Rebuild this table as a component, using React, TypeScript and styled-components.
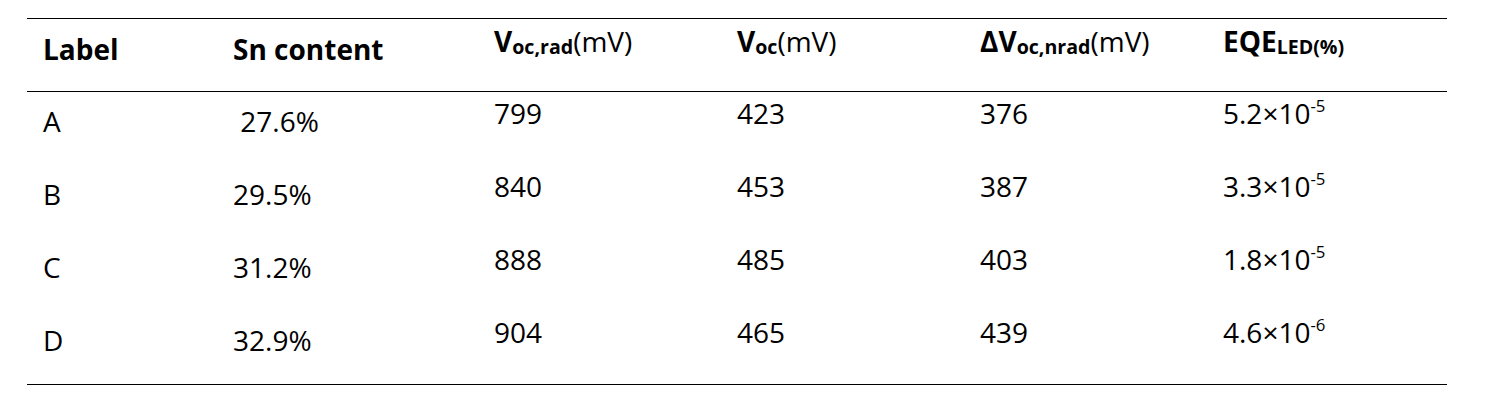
import React from 'react';
import styled, { createGlobalStyle } from 'styled-components';

const GlobalStyle = createGlobalStyle`
  html, body {
    margin: 0;
    padding: 0;
    background: #ffffff;
  }
  body {
    font-family: "Open Sans", "Noto Sans", sans-serif;
    color: #000;
  }
`;

const Page = styled.div`
  width: 1500px;
  height: 405px;
  padding: 18px 0 0 27px;
  box-sizing: border-box;
`;

const Table = styled.div`
  width: 1420px;
  border-top: 1px solid #000;
  border-bottom: 1px solid #000;
`;

const Row = styled.div<{ $header?: boolean }>`
  display: grid;
  grid-template-columns: 190px 261px 243px 243px 243px 1fr;
  align-items: start;
  padding-left: 16px;
  height: 73px;
  box-sizing: border-box;
  border-bottom: ${({ $header }) => ($header ? '1px solid #000' : 'none')};
`;

const HeadCell = styled.div<{ $lowered?: boolean }>`
  font-size: 28px;
  line-height: 28px;
  font-weight: 700;
  white-space: nowrap;
  padding-top: ${({ $lowered }) => ($lowered ? '16px' : '8px')};
`;

const Cell = styled.div<{ $lowered?: boolean }>`
  font-size: 28px;
  line-height: 28px;
  font-weight: 400;
  white-space: nowrap;
  padding-top: ${({ $lowered }) => ($lowered ? '15px' : '7px')};
`;

const Sub = styled.sub`
  font-size: 0.7em;
  line-height: 0;
  vertical-align: -0.08em;
  font-weight: 700;
`;

const Unit = styled.span`
  font-weight: 400;
`;

const Sup = styled.sup`
  font-size: 0.6em;
  line-height: 0;
  vertical-align: 0.72em;
`;

const rows = [
  { label: 'A', sn: '\u00a027.6%', rad: '799', voc: '423', nrad: '376', eqe: '5.2', exp: '-5' },
  { label: 'B', sn: '29.5%', rad: '840', voc: '453', nrad: '387', eqe: '3.3', exp: '-5' },
  { label: 'C', sn: '31.2%', rad: '888', voc: '485', nrad: '403', eqe: '1.8', exp: '-5' },
  { label: 'D', sn: '32.9%', rad: '904', voc: '465', nrad: '439', eqe: '4.6', exp: '-6' },
];

const App = () => {
  return (
    <Page>
      <GlobalStyle />
      <Table>
        <Row $header>
          <HeadCell $lowered>Label</HeadCell>
          <HeadCell $lowered>Sn content</HeadCell>
          <HeadCell>
            V<Sub>oc,rad</Sub><Unit>(mV)</Unit>
          </HeadCell>
          <HeadCell>
            V<Sub>oc</Sub><Unit>(mV)</Unit>
          </HeadCell>
          <HeadCell>
            ΔV<Sub>oc,nrad</Sub><Unit>(mV)</Unit>
          </HeadCell>
          <HeadCell>
            EQE<Sub>LED(%)</Sub>
          </HeadCell>
        </Row>
        {rows.map((r) => (
          <Row key={r.label}>
            <Cell $lowered>{r.label}</Cell>
            <Cell $lowered>{r.sn}</Cell>
            <Cell>{r.rad}</Cell>
            <Cell>{r.voc}</Cell>
            <Cell>{r.nrad}</Cell>
            <Cell>
              {r.eqe}×10<Sup>{r.exp}</Sup>
            </Cell>
          </Row>
        ))}
      </Table>
    </Page>
  );
};

export default App;
